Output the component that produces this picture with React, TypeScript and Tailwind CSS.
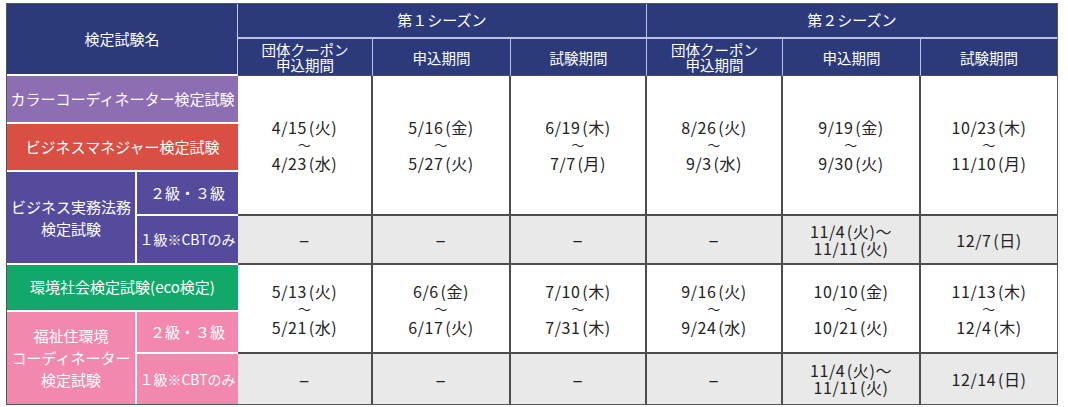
import React from "react";

const navy = "bg-[#2c3a7b]";
const line = "border-[#4d4d4d]";

type Group = { from: string; to: string };

const group1: Group[] = [
  { from: "4/15(火)", to: "4/23(水)" },
  { from: "5/16(金)", to: "5/27(火)" },
  { from: "6/19(木)", to: "7/7(月)" },
  { from: "8/26(火)", to: "9/3(水)" },
  { from: "9/19(金)", to: "9/30(火)" },
  { from: "10/23(木)", to: "11/10(月)" },
];

const group2: Group[] = [
  { from: "5/13(火)", to: "5/21(水)" },
  { from: "6/6(金)", to: "6/17(火)" },
  { from: "7/10(木)", to: "7/31(木)" },
  { from: "9/16(火)", to: "9/24(水)" },
  { from: "10/10(金)", to: "10/21(火)" },
  { from: "11/13(木)", to: "12/4(木)" },
];

// grid column classes written out so Tailwind picks them up
const dataCols = ["col-start-3", "col-start-4", "col-start-5", "col-start-6", "col-start-7", "col-start-8"];
const subHeads = ["団体クーポン\n申込期間", "申込期間", "試験期間", "団体クーポン\n申込期間", "申込期間", "試験期間"];

const sp = (s: string) => s.replace("(", "\u200A(");

function Range({ g }: { g: Group }) {
  return (
    <div className="flex flex-col items-center leading-[18px] text-[16px] tracking-[0.6px] text-[#222]">
      <span>{sp(g.from)}</span>
      <span className="text-[13px] leading-[18px]">～</span>
      <span>{sp(g.to)}</span>
    </div>
  );
}

function CbtRow({ row, last, bottom }: { row: string; last: string; bottom: boolean }) {
  return (
    <>
      {[0, 1, 2, 3, 4, 5].map((i) => (
        <div
          key={row + i}
          className={`${dataCols[i]} ${row} bg-[#e9e9e9] flex items-center justify-center text-[16px] tracking-[0.6px] text-[#222] ${line} ${bottom ? "border-b-2" : ""} ${i < 5 ? "border-r-2" : ""}`}
        >
          {i < 4 ? <span className="text-[19px]">–</span> : i === 4 ? (
            <div className="flex flex-col items-center leading-[17px]">
              <span>{sp("11/4(火)～")}</span>
              <span>{sp("11/11(火)")}</span>
            </div>
          ) : <span>{sp(last)}</span>}
        </div>
      ))}
    </>
  );
}

export default function App() {
  return (
    <div className="w-[1068px] h-[407px] bg-white pt-[3px] pl-[6px]" style={{ fontFamily: '"Noto Sans CJK JP", "Noto Sans", sans-serif' }}>
      <div className="grid w-[1052px] grid-cols-[130px_101px_135px_138px_136px_136px_138px_136px] grid-rows-[35px_37px_48px_48px_44px_49px_47px_42px_50px] border border-[#555]">
        {/* header */}
        <div className={`col-start-1 col-span-2 row-start-1 row-span-2 ${navy} border-r border-b-2 border-r-[#c8cdee] border-b-white flex items-center justify-center text-white text-[15px]`}>
          検定試験名
        </div>
        <div className={`col-start-3 col-span-3 row-start-1 ${navy} border-r border-b-2 border-[#b9c0e9] flex items-center justify-center text-white text-[15px]`}>
          第１シーズン
        </div>
        <div className={`col-start-6 col-span-3 row-start-1 ${navy} border-b-2 border-[#b9c0e9] flex items-center justify-center text-white text-[15px]`}>
          第２シーズン
        </div>
        {subHeads.map((h, i) => (
          <div
            key={h + i}
            className={`${dataCols[i]} row-start-2 ${navy} border-b ${i < 5 ? "border-r border-r-[#b9c0e9]" : ""} border-b-[#4d4d4d] flex items-center justify-center text-center whitespace-pre-line text-white text-[14.5px] leading-[15px]`}
          >
            {h}
          </div>
        ))}

        {/* exam names */}
        <div className="col-start-1 col-span-2 row-start-3 bg-[#8e6eb2] border-b-2 border-white flex items-center justify-center text-white text-[15px]">
          カラーコーディネーター検定試験
        </div>
        <div className="col-start-1 col-span-2 row-start-4 bg-[#d94f44] border-b-2 border-white flex items-center justify-center text-white text-[15px]">
          ビジネスマネジャー検定試験
        </div>
        <div className="col-start-1 row-start-5 row-span-2 bg-[#554b9c] border-r-2 border-b-2 border-white flex items-center justify-center text-center text-white text-[15px] leading-[22px]">
          ビジネス実務法務<br />検定試験
        </div>
        <div className="col-start-2 row-start-5 bg-[#554b9c] border-b-2 border-white flex items-center justify-center text-white text-[15px]">
          ２級・３級
        </div>
        <div className="col-start-2 row-start-6 bg-[#554b9c] border-b-2 border-white flex items-center justify-center text-white text-[14px]">
          １級※CBTのみ
        </div>
        <div className="col-start-1 col-span-2 row-start-7 bg-[#12a86a] border-b-2 border-white flex items-center justify-center text-white text-[15px]">
          環境社会検定試験(eco検定)
        </div>
        <div className="col-start-1 row-start-8 row-span-2 bg-[#f388ae] border-r-2 border-white flex items-center justify-center text-center text-white text-[15px] leading-[22px]">
          福祉住環境<br />コーディネーター<br />検定試験
        </div>
        <div className="col-start-2 row-start-8 bg-[#f388ae] border-b-2 border-white flex items-center justify-center text-white text-[15px]">
          ２級・３級
        </div>
        <div className="col-start-2 row-start-9 bg-[#f388ae] flex items-center justify-center text-white text-[14px]">
          １級※CBTのみ
        </div>

        {/* season dates */}
        {group1.map((g, i) => (
          <div key={"a" + i} className={`${dataCols[i]} row-start-3 row-span-3 bg-white border-b-2 ${line} ${i < 5 ? "border-r-2" : ""} flex items-center justify-center`}>
            <Range g={g} />
          </div>
        ))}
        <CbtRow row="row-start-6" last="12/7(日)" bottom />
        {group2.map((g, i) => (
          <div key={"b" + i} className={`${dataCols[i]} row-start-7 row-span-2 bg-white border-b-2 ${line} ${i < 5 ? "border-r-2" : ""} flex items-center justify-center`}>
            <Range g={g} />
          </div>
        ))}
        <CbtRow row="row-start-9" last="12/14(日)" bottom={false} />
      </div>
    </div>
  );
}
